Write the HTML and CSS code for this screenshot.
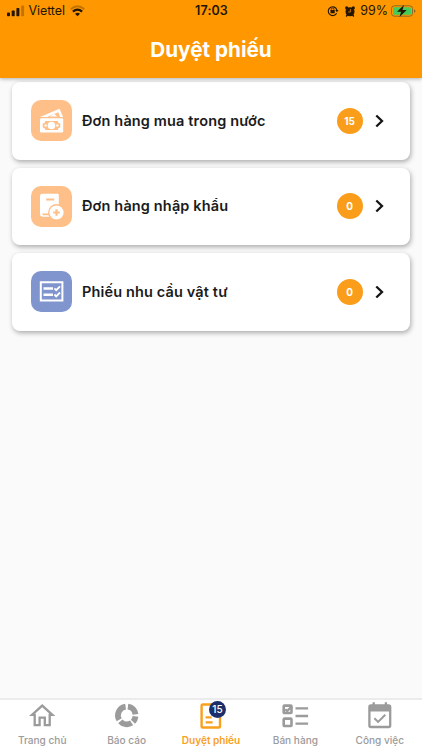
FILE: index.html
```html
<!DOCTYPE html>
<html lang="vi">
<head>
<meta charset="utf-8">
<title>Duyệt phiếu</title>
<link rel="stylesheet" href="styles.css">
</head>
<body>
<div class="app">
  <header class="header">
    <div class="status">
      <div class="status-left">
        <svg class="signal" width="18" height="12" viewBox="0 0 18 12"><rect x="0" y="7.5" width="3" height="3.7" rx=".8"/><rect x="4.7" y="5.5" width="3" height="5.7" rx=".8"/><rect x="9.4" y="3" width="3" height="8.2" rx=".8"/><rect x="14.1" y=".5" width="3" height="10.700" rx=".8" opacity=".28"/></svg>
        <span class="carrier">Viettel</span>
        <svg class="wifi" width="15" height="12" viewBox="0 0 15 12" fill="none" stroke="#241500" stroke-width="2"><path d="M.8 4.2Q7.5-1.800 14.200 4.200" opacity=".28"/><path d="M2.900 6.700Q7.500 2.500 12.100 6.700" stroke-width="2.300"/><path d="M5 8.700Q7.500 6.900 10 8.700L7.500 11.200Z" fill="#241500" stroke="none"/></svg>
      </div>
      <span class="clock">17:03</span>
      <div class="status-right">
        <svg width="12" height="12" viewBox="0 0 12 12"><path d="M9.6 8.2A4.4 4.4 0 1 1 9.9 5" fill="none" stroke="#241500" stroke-width="1.1"/><path d="M8.3 5h3.2L9.9 7.2Z"/><rect x="3.5" y="5" width="4.2" height="3.2" rx=".4"/><path d="M4.3 5V4.3a1.3 1.3 0 0 1 2.6 0V5" fill="none" stroke="#241500" stroke-width=".8"/></svg>
        <svg class="alarm" width="10" height="11" viewBox="0 0 10 11"><circle cx="5" cy="5.7" r="4.5"/><circle cx="1.7" cy="1.9" r="1.6"/><circle cx="8.3" cy="1.9" r="1.6"/><path d="M1.2 10.5 3 8M8.8 10.5 7 8" stroke="#241500" stroke-width="1.4"/><path d="M5.4 3v3H3.2" fill="none" stroke="#ff9800" stroke-width=".7"/></svg>
        <span class="percent">99%</span>
        <svg class="battery" width="25" height="12" viewBox="0 0 25 12"><rect x=".5" y=".8" width="21" height="10.4" rx="2.8" fill="none" stroke="#8f6826"/><rect x="2" y="2.3" width="18" height="7.4" rx="1.5" fill="#43cc5b"/><path d="M23 4.2q1.500.4 1.500 1.800T23 7.800Z" fill="#8f6826"/><path d="M13 .1 6 6.800h4.100L8.500 12l7.200-7h-4.200Z"/></svg>
      </div>
    </div>
    <h1 class="title">Duyệt phiếu</h1>
  </header>

  <main class="list">
    <div class="card">
      <div class="tile peach">
        <svg width="41" height="41" viewBox="0 0 41 41"><path d="m9 17 19.500-8.300 3.600 8.300H29l-1.700-4.800L16 17Z" fill="#fff"/><path d="m18.500 16.500 4.700-2.500 3.200 2.500Z" fill="#fff"/><rect x="9" y="18.300" width="23.200" height="14.200" rx="1.300" fill="#fff"/><path d="M14.200 20.900h12.600a2.500 2.500 0 0 0 2.500 2.500v4.200a2.500 2.500 0 0 0-2.500 2.500H14.200a2.500 2.500 0 0 0-2.500-2.500v-4.200a2.500 2.500 0 0 0 2.500-2.500Z" fill="#ffbf89"/><circle cx="20.500" cy="25.500" r="3.800" fill="#fff"/><circle cx="14.600" cy="25.500" r="1.200" fill="#fff"/><circle cx="26.400" cy="25.500" r="1.200" fill="#fff"/></svg>
      </div>
      <span class="label">Đơn hàng mua trong nước</span>
      <span class="count">15</span>
      <svg class="chevron" width="9" height="14" viewBox="0 0 9 14"><path d="m1.300 1.500 5.700 5.500-5.700 5.500"/></svg>
    </div>
    <div class="card">
      <div class="tile peach">
        <svg width="41" height="41" viewBox="0 0 41 41"><path d="M9 28V10q0-2.200 2.200-2.200h15.400q1.200 0 1.200 1.200v21.800H12Q9 30.800 9 28Z" fill="#fff"/><path d="M15.200 13.500h8M11.500 28.300h7" stroke="#ffbf89" stroke-width="1.800"/><circle cx="25.500" cy="26.500" r="8.400" fill="#ffbf89"/><circle cx="25.500" cy="26.500" r="7.100" fill="#fff"/><path d="M25.500 23.200v6.600m-3.300-3.300h6.600" stroke="#ffbf89" stroke-width="2.200"/></svg>
      </div>
      <span class="label">Đơn hàng nhập khẩu</span>
      <span class="count">0</span>
      <svg class="chevron" width="9" height="14" viewBox="0 0 9 14"><path d="m1.300 1.500 5.700 5.500-5.700 5.500"/></svg>
    </div>
    <div class="card">
      <div class="tile blue">
        <svg width="41" height="41" viewBox="0 0 41 41" fill="none" stroke="#fff" stroke-width="2"><path d="M9.800 11.200h21.600v18.300H9.800Z"/><path d="M12.500 17.500h9.500M12.500 23.700h9.500" stroke-width="2.400"/><path d="m23.400 17.300 1.800 1.800 3.800-3.800M23.400 23.500l1.800 1.800 3.800-3.800" stroke-width="1.900"/></svg>
      </div>
      <span class="label">Phiếu nhu cầu vật tư</span>
      <span class="count">0</span>
      <svg class="chevron" width="9" height="14" viewBox="0 0 9 14"><path d="m1.300 1.500 5.700 5.500-5.700 5.500"/></svg>
    </div>
  </main>

  <nav class="tabs">
    <div class="tab">
      <svg width="28" height="28" viewBox="0 0 28 28" fill="none" stroke="#9b9b9b" stroke-width="2.300"><path d="M4 13.800 14.200 4.600l10.200 9.200H21.700v10.300h-4.900v-7.400h-5.200v7.400H6.700V13.800Z"/></svg>
      <span>Trang chủ</span>
    </div>
    <div class="tab">
      <svg width="28" height="28" viewBox="0 0 28 28" fill="none" stroke="#9b9b9b" stroke-width="5.800"><path d="M14.900 5.600A8.800 8.800 0 0 1 22.500 13.300M22.500 15.400A8.800 8.800 0 0 1 20 20.700M18.600 21.900A8.800 8.800 0 0 1 7.300 20.300M6.200 18.800A8.800 8.800 0 0 1 12.600 5.600"/></svg>
      <span>Báo cáo</span>
    </div>
    <div class="tab active">
      <div class="badged">
        <svg width="28" height="28" viewBox="0 0 28 28" fill="none" stroke="#f9a01e" stroke-width="2.400"><rect x="4.600" y="3.500" width="18.400" height="23" rx="1.300"/><path d="M8.600 16.400h6M8.600 21.400h7" stroke-width="2.200"/></svg>
        <span class="badge">15</span>
      </div>
      <span>Duyệt phiếu</span>
    </div>
    <div class="tab">
      <svg width="28" height="28" viewBox="0 0 28 28" fill="none" stroke="#9b9b9b" stroke-width="2.600"><rect x="2.700" y="4.600" width="7.800" height="7.400" rx=".8"/><rect x="2.700" y="17.600" width="7.800" height="7.400" rx=".8"/><path d="m4.200 8.200 1.900 1.900 4.700-4.700M14.500 7.300h12.600M14.500 15h12.600M14.500 22.700h12.600" stroke-width="2.300"/></svg>
      <span>Bán hàng</span>
    </div>
    <div class="tab">
      <svg width="28" height="28" viewBox="0 0 28 28" fill="none" stroke="#9b9b9b" stroke-width="2.300"><rect x="3.400" y="4.500" width="20.800" height="21.500" rx="1.500"/><path d="M3.700 4h20.500v6.500H3.700Z" fill="#9b9b9b" stroke="none"/><path d="M7.700 1.300v4M19.900 1.300v4"/><path d="m8.400 17.200 3.700 3.700 7.200-7.200" stroke-width="2"/></svg>
      <span>Công việc</span>
    </div>
  </nav>
</div>
</body>
</html>
```
FILE: styles.css
```css
* { box-sizing: border-box; }
body { margin: 0; font-family: Inter, "Liberation Sans", sans-serif; }
svg { display: block; flex: none; }
.app { width: 422px; height: 750px; display: flex; flex-direction: column; background: #fafafa; overflow: hidden; }
.header { height: 77.500px; flex: none; background: #ff9800; box-shadow: 0 1px 4px rgba(0,0,0,.3); position: relative; z-index: 1; }
.status { height: 22px; display: grid; grid-template-columns: 1fr auto 1fr; align-items: center; padding: 0 6px 0 7px; color: #241500; fill: #241500; font-size: 12.5px; line-height: 22px; }
.status-left, .status-right { display: flex; align-items: center; }
.status-right { justify-content: flex-end; }
.carrier { margin-left: 3.500px; letter-spacing: -.1px; }
.wifi { margin-left: 5px; }
.clock { font-weight: 600; letter-spacing: .1px; }
.alarm { margin-left: 6px; }
.percent { margin-left: 5px; }
.battery { margin-left: 3px; }
.title { margin: 11px 0 0; text-align: center; color: #fff; font-size: 20.700px; line-height: 33px; font-weight: 700; }
.list { flex: 1; display: flex; flex-direction: column; gap: 8px; padding: 4.500px 12px 0; }
.card { height: 77.600px; display: flex; align-items: center; padding: 0 26.500px 0 18.500px; background: #fff; border-radius: 8px; box-shadow: 1px 2px 5px rgba(0,0,0,.32); }
.tile { width: 41px; height: 41px; border-radius: 10px; flex: none; }
.peach { background: #ffbf89; }
.blue { background: #8095ce; }
.label { margin-left: 10.500px; flex: 1; font-size: 14.500px; line-height: 20px; font-weight: 600; letter-spacing: .14px; color: #1b1b1b; white-space: nowrap; }
.count { width: 26px; height: 26px; border-radius: 50%; background: #f99d1b; color: #fff; font-size: 10px; line-height: 26px; font-weight: 700; text-align: center; }
.chevron { margin-left: 12px; fill: none; stroke: #151515; stroke-width: 2.300; }
.tabs { height: 52px; flex: none; display: grid; grid-template-columns: repeat(5, 1fr); background: #fff; border-top: 2px solid #ebebeb; }
.tab { padding-top: 1px; display: flex; flex-direction: column; align-items: center; color: #9b9b9b; font-size: 10.100px; line-height: 14px; font-weight: 500; white-space: nowrap; }
.tab > span { margin-top: 4px; }
.active { color: #f9a01e; font-weight: 600; }
.badged { position: relative; }
.badge { position: absolute; left: 12px; top: 0; width: 17px; height: 17px; border-radius: 50%; background: #1d2f6b; color: #fff; font-size: 10px; line-height: 17px; font-weight: 500; text-align: center; }
```
